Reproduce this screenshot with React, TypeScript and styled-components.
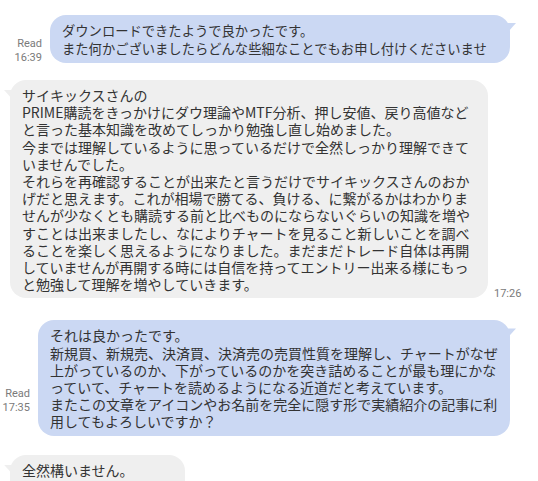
import React from "react"
import styled, { createGlobalStyle, css } from "styled-components"

const GlobalStyle = createGlobalStyle`
  html, body {
    margin: 0;
    padding: 0;
    background: #ffffff;
  }
  body {
    font-family: "Noto Sans CJK JP", "Noto Sans", sans-serif;
    -webkit-font-smoothing: antialiased;
  }
`

const blue = "#cbd8f3"
const grey = "#efefef"

const Thread = styled.div`
  width: 538px;
  height: 481px;
  overflow: hidden;
  display: flex;
  flex-direction: column;
  padding-top: 15px;
  box-sizing: border-box;
`

const Row = styled.div<{ $out?: boolean; $gap: number }>`
  display: flex;
  align-items: flex-end;
  justify-content: ${p => (p.$out ? "flex-end" : "flex-start")};
  margin-bottom: ${p => p.$gap}px;
  padding: ${p => (p.$out ? "0 28px 0 0" : "0 0 0 10px")};
`

const Meta = styled.div<{ $out?: boolean; $lift: number }>`
  font-family: Roboto, "Liberation Sans", sans-serif;
  font-size: 11px;
  line-height: 14px;
  color: #7a7a7a;
  text-align: ${p => (p.$out ? "right" : "left")};
  margin: ${p => (p.$out ? `0 8px ${p.$lift}px 0` : `0 0 ${p.$lift}px 6px`)};
  white-space: nowrap;
`

const Bubble = styled.div<{ $out?: boolean; $width: number; $size: number }>`
  position: relative;
  width: ${p => p.$width}px;
  box-sizing: border-box;
  padding: 7px 12px 5px;
  border-radius: 16px;
  background: ${p => (p.$out ? blue : grey)};
  color: #333333;
  font-size: ${p => p.$size}px;
  line-height: ${p => (p.$size < 14 ? 18 : 17.2)}px;
  white-space: pre;

  &::after {
    content: "";
    position: absolute;
    top: 8px;
    width: 9px;
    height: 10px;
    background: ${p => (p.$out ? blue : grey)};
    ${p =>
      p.$out
        ? css`
            right: -6px;
            clip-path: polygon(0 0, 100% 0, 0 100%);
          `
        : css`
            left: -6px;
            top: 10px;
            clip-path: polygon(0 0, 100% 0, 100% 100%);
          `}
  }
`

const Message: React.FC<{
  out?: boolean
  width: number
  gap: number
  size?: number
  lift?: number
  read?: boolean
  time?: string
  children: React.ReactNode
}> = ({ out, width, gap, size = 14, lift = 0, read, time, children }) => (
  <Row $out={out} $gap={gap}>
    {out && time && (
      <Meta $out $lift={lift}>
        {read && <div>Read</div>}
        <div>{time}</div>
      </Meta>
    )}
    <Bubble $out={out} $width={width} $size={size}>
      {children}
    </Bubble>
    {!out && time && <Meta $lift={lift}>{time}</Meta>}
  </Row>
)

const App: React.FC = () => (
  <>
    <GlobalStyle />
    <Thread>
      <Message out width={460} gap={17} size={13.3} lift={-2} read time="16:39">
        {"ダウンロードできたようで良かったです。\nまた何かございましたらどんな些細なことでもお申し付けくださいませ"}
      </Message>
      <Message width={478} gap={22} lift={-3} time="17:26">
        {[
          "サイキックスさんの",
          "PRIME購読をきっかけにダウ理論やMTF分析、押し安値、戻り高値など",
          "と言った基本知識を改めてしっかり勉強し直し始めました。",
          "今までは理解しているように思っているだけで全然しっかり理解できて",
          "いませんでした。",
          "それらを再確認することが出来たと言うだけでサイキックスさんのおか",
          "げだと思えます。これが相場で勝てる、負ける、に繋がるかはわかりま",
          "せんが少なくとも購読する前と比べものにならないぐらいの知識を増や",
          "すことは出来ましたし、なによりチャートを見ること新しいことを調べ",
          "ることを楽しく思えるようになりました。まだまだトレード自体は再開",
          "していませんが再開する時には自信を持ってエントリー出来る様にもっ",
          "と勉強して理解を増やしていきます。",
        ].join("\n")}
      </Message>
      <Message out width={472} gap={19} lift={21} read time="17:35">
        {[
          "それは良かったです。",
          "新規買、新規売、決済買、決済売の売買性質を理解し、チャートがなぜ",
          "上がっているのか、下がっているのかを突き詰めることが最も理にかな",
          "っていて、チャートを読めるようになる近道だと考えています。",
          "またこの文章をアイコンやお名前を完全に隠す形で実績紹介の記事に利",
          "用してもよろしいですか？",
        ].join("\n")}
      </Message>
      <Message width={175} gap={0}>
        {"全然構いません。\nむしろ光栄です！ぜひ"}
      </Message>
    </Thread>
  </>
)

export default App
